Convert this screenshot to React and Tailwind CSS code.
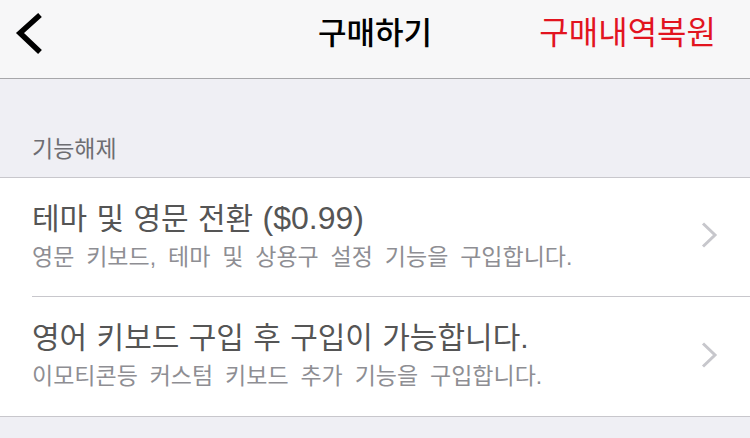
const font = { fontFamily: '"Liberation Sans", "Noto Sans CJK KR", "Noto Sans", sans-serif' }

function Row({ title, sub, last }) {
  return (
    <div className="flex items-center pl-8">
      <div className={`flex-1 flex items-center h-[119px] pr-8 ${last ? '' : 'border-b border-[#c8c7cc]'}`}>
        <div className="flex-1 mt-[-3px]">
          <div className="text-[30px] leading-[38px] text-[#555555] [word-spacing:1px]">{title}</div>
          <div className="text-[23px] leading-[32px] text-[#8e8e93] mt-[3px] [word-spacing:5.5px]">{sub}</div>
        </div>
        <svg width="18" height="28" viewBox="0 0 18 28" className="mt-[-4px]">
          <path d="M3 2.5 L15 14 L3 25.5" fill="none" stroke="#c7c7cc" strokeWidth="3" />
        </svg>
      </div>
    </div>
  )
}

export default function App() {
  return (
    <div className="w-[750px] h-[438px] bg-[#efeff4] overflow-hidden" style={font}>
      <div className="h-[79px] bg-[#f7f7f8] border-b border-[#a7a7aa] relative flex items-center justify-center">
        <svg width="30" height="46" viewBox="0 0 30 46" className="absolute left-[14px] top-[11px]">
          <path d="M26 4 L6 22 L26 41" fill="none" stroke="#000" strokeWidth="5.5" />
        </svg>
        <div className="text-[31px] font-medium text-black mt-[-10px]">구매하기</div>
        <div className="absolute right-[34px] top-[9px] text-[32px] text-[#e2141f]">구매내역복원</div>
      </div>
      <div className="h-[98px] flex items-end pl-8 pb-[11px]">
        <div className="text-[23px] text-[#6d6d72]">기능해제</div>
      </div>
      <div className="bg-white border-t border-b border-[#c8c7cc]">
        <Row title={<>테마 및 영문 전환 <span className="text-[32px]">($0.99)</span></>} sub="영문 키보드, 테마 및 상용구 설정 기능을 구입합니다." />
        <Row title="영어 키보드 구입 후 구입이 가능합니다." sub="이모티콘등 커스텀 키보드 추가 기능을 구입합니다." last />
      </div>
    </div>
  )
}
